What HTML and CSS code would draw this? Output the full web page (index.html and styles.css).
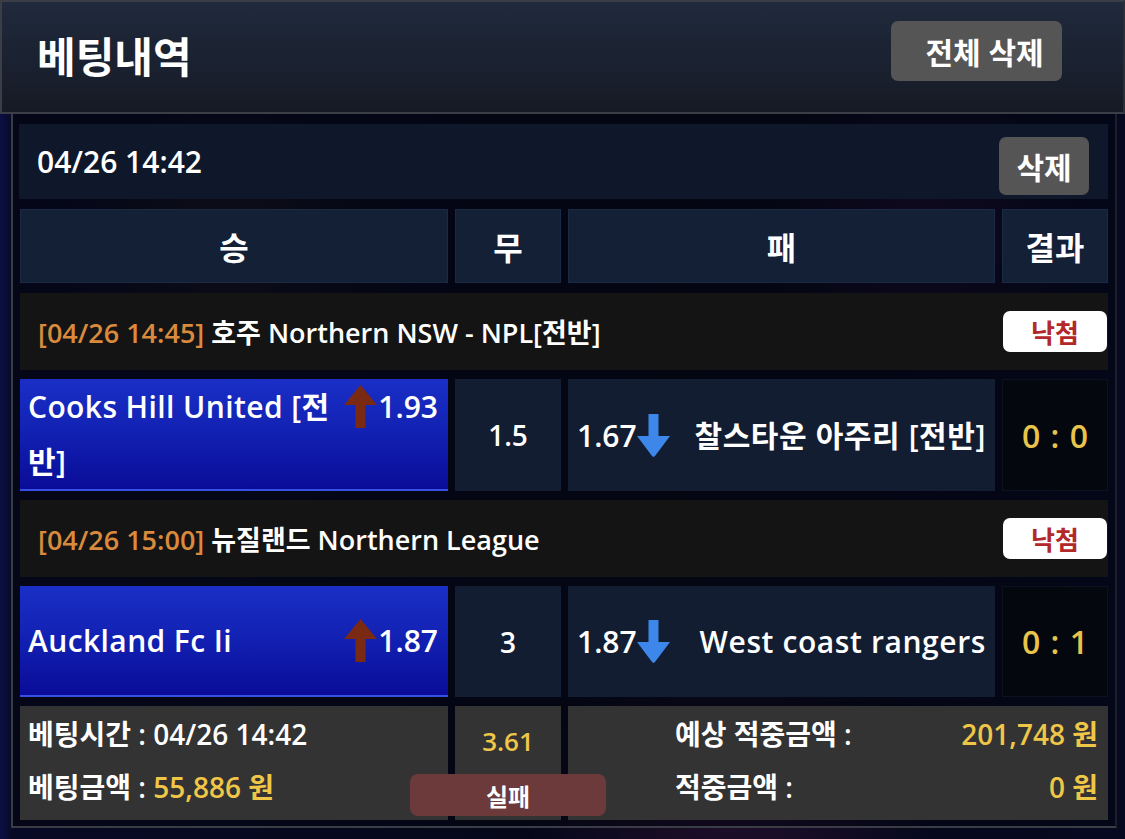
FILE: index.html
```html
<!DOCTYPE html>
<html lang="ko">
<head>
<meta charset="utf-8">
<title>베팅내역</title>
<link rel="stylesheet" href="styles.css">
</head>
<body>
<div class="page">
  <header class="topbar">
    <h1 class="title">베팅내역</h1>
    <button class="btn btn-all">전체 삭제</button>
  </header>

  <main class="wrap">
    <section class="slip">
      <div class="date-row">
        <span class="date">04/26 14:42</span>
        <button class="btn btn-del">삭제</button>
      </div>

      <div class="grid head-row">
        <div class="hcell">승</div>
        <div class="hcell">무</div>
        <div class="hcell">패</div>
        <div class="hcell">결과</div>
      </div>

      <div class="league">
        <div class="league-text"><span class="ltime">[04/26 14:45]</span> 호주 Northern NSW - NPL[전반]</div>
        <span class="badge">낙첨</span>
      </div>

      <div class="grid match">
        <div class="home">
          <div class="home-inner">
            <span class="odds odds-right"><svg class="arrow" viewBox="0 0 33 43" width="33" height="43"><polygon points="16.5,0 33,20 21.5,20 21.5,43 11.5,43 11.5,20 0,20" fill="#7a2a12"/></svg>1.93</span>Cooks Hill United [전반]
          </div>
        </div>
        <div class="draw">1.5</div>
        <div class="away">
          <div class="away-inner">
            <span class="odds odds-left">1.67<svg class="arrow" viewBox="0 0 33 43" width="33" height="43"><polygon points="11.5,0 21.5,0 21.5,22 33,22 18,42 16.5,43 15,42 0,22 11.5,22" fill="#3d87eb"/></svg></span>찰스타운 아주리 [전반]
          </div>
        </div>
        <div class="result">0 : 0</div>
      </div>

      <div class="league">
        <div class="league-text"><span class="ltime">[04/26 15:00]</span> 뉴질랜드 Northern League</div>
        <span class="badge">낙첨</span>
      </div>

      <div class="grid match">
        <div class="home">
          <div class="home-inner">
            <span class="odds odds-right"><svg class="arrow" viewBox="0 0 33 43" width="33" height="43"><polygon points="16.5,0 33,20 21.5,20 21.5,43 11.5,43 11.5,20 0,20" fill="#7a2a12"/></svg>1.87</span>Auckland Fc Ii
          </div>
        </div>
        <div class="draw">3</div>
        <div class="away">
          <div class="away-inner">
            <span class="odds odds-left">1.87<svg class="arrow" viewBox="0 0 33 43" width="33" height="43"><polygon points="11.5,0 21.5,0 21.5,22 33,22 18,42 16.5,43 15,42 0,22 11.5,22" fill="#3d87eb"/></svg></span>West coast rangers
          </div>
        </div>
        <div class="result">0 : 1</div>
      </div>

      <div class="grid footer">
        <div class="fcell fleft">
          <div class="fline">베팅시간 : 04/26 14:42</div>
          <div class="fline">베팅금액 : <span class="gold">55,886 원</span></div>
        </div>
        <div class="fcell fmid">
          <div class="total gold">3.61</div>
          <button class="btn-fail">실패</button>
        </div>
        <div class="fcell fright">
          <div class="frow"><span>예상 적중금액 :</span><span class="gold">201,748 원</span></div>
          <div class="frow"><span>적중금액 :</span><span class="gold">0 원</span></div>
        </div>
      </div>
    </section>
  </main>
</div>
</body>
</html>
```

FILE: styles.css
```css
* { box-sizing: border-box; }

html, body {
  margin: 0;
  padding: 0;
}

body {
  width: 1125px;
  height: 839px;
  overflow: hidden;
  font-family: "Open Sans", "Noto Sans CJK KR", sans-serif;
  font-weight: 600;
  color: #ffffff;
  background:
    radial-gradient(ellipse 260px 200px at 230px 240px, rgba(120, 90, 40, 0.18), transparent 70%),
    radial-gradient(ellipse 240px 200px at 920px 220px, rgba(120, 40, 110, 0.22), transparent 70%),
    radial-gradient(ellipse 300px 200px at 730px 800px, rgba(120, 40, 110, 0.25), transparent 70%),
    linear-gradient(90deg, #0b0f45 0px, #070a24 12px, #050716 60%, #060920 100%);
}

.page {
  display: flex;
  flex-direction: column;
  height: 100%;
}

.btn {
  border: none;
  background: #555555;
  color: #ffffff;
  font-family: inherit;
  font-weight: 600;
  border-radius: 7px;
  padding: 0;
  cursor: pointer;
}

/* top bar */
.topbar {
  height: 114px;
  display: flex;
  align-items: center;
  justify-content: space-between;
  padding: 0 61px 0 35px;
  background: linear-gradient(180deg, #202a3c 0%, #1a2130 55%, #161a24 100%);
  border: 2px solid #3b3e46;
  border-right-color: #2c2f36;
}

.title {
  margin: 0;
  font-size: 42px;
  font-weight: 700;
  line-height: 1;
}

.btn-all {
  width: 171px;
  height: 60px;
  font-size: 30px;
  margin-bottom: 13px;
  padding-left: 16px;
}

/* content wrapper */
.wrap {
  margin: 0 8px 0 11px;
  border-left: 2px solid #3a3d46;
  border-right: 2px solid #1c1f2a;
  border-bottom: 2px solid #3a3d46;
  padding: 10px 7px 8px 6px;
  background: rgba(4, 6, 16, 0.55);
}

.slip {
  display: flex;
  flex-direction: column;
  gap: 10px;
  padding-left: 1px;
}

.date-row {
  height: 75px;
  display: flex;
  align-items: center;
  justify-content: space-between;
  background: #0f182a;
  padding: 0 19px 0 18px;
  margin-left: -1px;
}

.date {
  font-size: 30px;
}

.btn-del {
  width: 90px;
  height: 58px;
  font-size: 30px;
  margin-top: 8px;
}

.grid {
  display: grid;
  grid-template-columns: 428px 106px 1fr 106px;
  column-gap: 7px;
}

.head-row {
  height: 74px;
}

.hcell {
  background: #132036;
  border: 1px solid #1b2a44;
  display: flex;
  align-items: center;
  justify-content: center;
  font-size: 32px;
}

.league {
  height: 77px;
  background: #141414;
  display: flex;
  align-items: center;
  justify-content: space-between;
  padding: 0 1px 0 18px;
}

.league-text {
  font-size: 27px;
}

.ltime {
  color: #d98a3d;
}

.badge {
  width: 104px;
  height: 41px;
  background: #ffffff;
  border-radius: 7px;
  color: #b3282a;
  font-size: 26px;
  font-weight: 700;
  display: flex;
  align-items: center;
  justify-content: center;
}

.match {
  height: 111px;
  margin-top: -1px;
}

.home {
  background: linear-gradient(180deg, #1a2fc6 0%, #1222b4 45%, #0a0c98 100%);
  border-bottom: 2px solid #3750e4;
  display: flex;
  align-items: center;
  padding: 0 10px 0 8px;
  font-size: 30px;
  letter-spacing: 0.4px;
  line-height: 55px;
}

.home-inner {
  width: 100%;
}

.odds {
  display: inline-flex;
  align-items: center;
  height: 55px;
  letter-spacing: 0;
}

.odds-right {
  float: right;
}

.odds-left {
  float: left;
  margin-right: 14px;
}

.arrow {
  display: block;
}

.odds-right .arrow {
  margin-right: 1px;
}

.odds-left .arrow {
  margin-left: 0;
}

.draw {
  background: #131d31;
  display: flex;
  align-items: center;
  justify-content: center;
  font-size: 28px;
}

.away {
  background: #131d31;
  display: flex;
  align-items: center;
  padding: 0 9px 0 9px;
  font-size: 30px;
  letter-spacing: 0.6px;
  line-height: 55px;
}

.away-inner {
  width: 100%;
  text-align: right;
}

.result {
  background: #05070e;
  border: 1px solid #0d1220;
  display: flex;
  align-items: center;
  justify-content: center;
  font-size: 32px;
  word-spacing: 2px;
  color: #e8c44a;
}

.footer {
  height: 112px;
  margin-top: -1px;
}

.fcell {
  background: #333333;
}

.fleft {
  padding: 8px 8px 0 8px;
  font-size: 28px;
}

.fline {
  height: 53px;
  line-height: 40px;
}

.gold {
  color: #f0c648;
}

.fmid {
  display: flex;
  flex-direction: column;
  align-items: center;
  padding-top: 15px;
}

.total {
  font-size: 26px;
  line-height: 40px;
}

.btn-fail {
  position: relative;
  z-index: 1;
  flex: none;
  width: 196px;
  height: 42px;
  margin-top: 13px;
  border: none;
  border-radius: 8px;
  background: #6c3a3a;
  color: #ffffff;
  font-family: inherit;
  font-size: 24px;
  font-weight: 600;
  padding: 0;
}

.fright {
  grid-column: span 2;
  padding: 8px 10px 0 107px;
  font-size: 28px;
}

.frow {
  display: flex;
  justify-content: space-between;
  height: 53px;
  line-height: 40px;
}
```
